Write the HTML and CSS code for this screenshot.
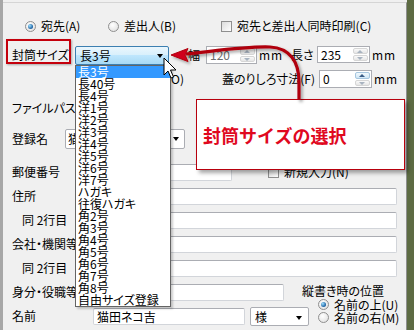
FILE: index.html
```html
<!DOCTYPE html>
<html lang="ja">
<head>
    <meta charset="UTF-8">
    <meta name="viewport" content="width=device-width, initial-scale=1.0">
    <title>封筒サイズの選択</title>
    <link rel="stylesheet" href="styles.css">
</head>
<body>
    <div class="screen">
        <div class="window">
            <div class="panel">
                <div class="row row-dest">
                    <label class="opt opt-a"><span class="radio on"></span>宛先(A)</label>
                    <label class="opt opt-b"><span class="radio"></span>差出人(B)</label>
                    <label class="opt"><span class="check"></span>宛先と差出人同時印刷(C)</label>
                </div>
                <div class="row row-size">
                    <span class="lbl lbl-size">封筒サイズ</span>
                    <div class="combo combo-hot">長3号<span class="arrow"></span></div>
                    <span class="lbl lbl-w">幅</span>
                    <div class="spin spin-w disabled"><span class="val">120</span><span class="btns"><i class="up"></i><i class="down"></i></span></div>
                    <span class="unit unit-w">mm</span>
                    <span class="lbl lbl-h">長さ</span>
                    <div class="spin"><span class="val">235</span><span class="btns"><i class="up"></i><i class="down"></i></span></div>
                    <span class="unit">mm</span>
                </div>
                <div class="row row-flap">
                    <span class="lbl lbl-o">(O)</span>
                    <span class="lbl lbl-f">蓋のりしろ寸法(F)</span>
                    <div class="spin spin-f"><span class="val">0</span><span class="btns"><i class="up hot"></i><i class="down"></i></span></div>
                    <span class="unit">mm</span>
                </div>
                <div class="row row-path">
                    <span class="lbl">ファイルパス</span>
                </div>
                <div class="row row-reg">
                    <span class="lbl lbl-reg">登録名</span>
                    <div class="combo combo-reg">猫田ネコ吉<span class="arrow"></span></div>
                </div>

                <div class="rows">
                    <div class="frow">
                        <span class="flbl">郵便番号</span>
                        <div class="field f-zip"></div>
                        <label class="opt opt-new"><span class="check"></span>新規入力(N)</label>
                    </div>
                    <div class="frow">
                        <span class="flbl">住所</span>
                        <div class="field f-wide"></div>
                    </div>
                    <div class="frow">
                        <span class="flbl sub">同 2行目</span>
                        <div class="field f-wide"></div>
                    </div>
                    <div class="frow">
                        <span class="flbl">会社・機関等</span>
                        <div class="field f-wide"></div>
                    </div>
                    <div class="frow">
                        <span class="flbl sub">同 2行目</span>
                        <div class="field f-wide"></div>
                    </div>
                    <div class="frow">
                        <span class="flbl">身分・役職等</span>
                        <div class="field f-title"></div>
                        <div class="vpos">
                            <div class="vpos-head">縦書き時の位置</div>
                            <label class="opt"><span class="radio on"></span>名前の上(U)</label>
                            <label class="opt"><span class="radio"></span>名前の右(M)</label>
                        </div>
                    </div>
                    <div class="frow">
                        <span class="flbl">名前</span>
                        <div class="field f-name">猫田ネコ吉</div>
                        <div class="combo combo-hon">様<span class="arrow"></span></div>
                    </div>
                </div>
            </div>
        </div>

        <!-- annotations over the dialog -->
        <div class="mark-box"></div>

        <ul class="droplist">
            <li class="sel">長3号</li>
            <li>長40号</li>
            <li>長4号</li>
            <li>洋1号</li>
            <li>洋2号</li>
            <li>洋3号</li>
            <li>洋4号</li>
            <li>洋5号</li>
            <li>洋6号</li>
            <li>洋7号</li>
            <li>ハガキ</li>
            <li>往復ハガキ</li>
            <li>角2号</li>
            <li>角3号</li>
            <li>角4号</li>
            <li>角5号</li>
            <li>角6号</li>
            <li>角7号</li>
            <li>角8号</li>
            <li>自由サイズ登録</li>
        </ul>

        <div class="callout">封筒サイズの選択</div>

        <svg class="pointer" width="414" height="330" viewBox="0 0 414 330">
            <defs>
                <filter id="sh" x="-20%" y="-20%" width="140%" height="140%">
                    <feDropShadow dx="2" dy="2" stdDeviation="1.5" flood-color="#000" flood-opacity="0.35"/>
                </filter>
            </defs>
            <g filter="url(#sh)">
                <path d="M186 54 C215 51 248 46 270 47 C290 48 299 62 299 82 L299 100" fill="none" stroke="#b0000f" stroke-width="3.2"/>
                <path d="M171 55 L188 48.5 L185 55 L188 61.5 Z" fill="#d0021b" stroke="#b0000f" stroke-width="1" stroke-linejoin="round"/>
            </g>
        </svg>

        <svg class="cursor" width="14" height="23" viewBox="0 0 14 23">
            <path d="M1 1 L1 18 L5 14 L8 21 L10.5 20 L7.5 13 L13 13 Z" fill="#fff" stroke="#000" stroke-width="1" stroke-linejoin="round"/>
        </svg>
    </div>
</body>
</html>
```

FILE: styles.css
```css
body {
    margin: 0;
    font-family: "Noto Sans CJK JP", sans-serif;
    font-size: 12px;
    font-feature-settings: "palt";
    color: #000;
}
.screen {
    position: relative;
    width: 414px;
    height: 330px;
    overflow: hidden;
    background-color: #5d6b43;
}
.window {
    width: 407px;
    height: 330px;
    background-color: #f0f0f0;
    border-left: 3px solid #a7a7a7;
    box-sizing: border-box;
    padding-top: 2px;
}
.panel {
    height: 328px;
    border-top: 1px solid #d5d5d5;
    border-right: 1px solid #8e8f8f;
    box-sizing: border-box;
    padding-top: 13px;
    padding-left: 1px;
}
.row {
    display: flex;
    align-items: center;
    height: 20px;
    line-height: 14px;
    white-space: nowrap;
}
.row-size {
    margin-top: 10px;
    align-items: flex-start;
}
.row-size .lbl {
    margin-top: 2px;
}
.row-flap {
    margin-top: 3px;
}
.row-path {
    margin-top: 9px;
}
.row-reg {
    margin-top: 11px;
}
.lbl {
    display: inline-block;
}
.row-path .lbl,
.lbl-size,
.lbl-reg {
    margin-left: 8px;
}
.lbl-size {
    width: 63px;
}
.lbl-reg {
    width: 53px;
}
.lbl-w {
    margin-left: 19px;
    width: 18px;
}
.lbl-h {
    width: 26px;
}
.lbl-o {
    margin-left: 163px;
    width: 55px;
}
.lbl-f {
    width: 97px;
}
.unit {
    margin-left: 2px;
    letter-spacing: 1px;
}
.unit-w {
    width: 32px;
}
.row-size .unit {
    margin-top: 2px;
}

/* radio buttons and check boxes */
.opt {
    display: inline-flex;
    align-items: center;
    gap: 5px;
}
.opt-a {
    margin-left: 21px;
    width: 83px;
}
.opt-b {
    width: 113px;
}
.radio {
    width: 11px;
    height: 11px;
    border: 1px solid #8f8f8f;
    border-radius: 50%;
    background: radial-gradient(circle at 40% 35%, #ffffff, #dcdcdc);
    box-sizing: border-box;
    position: relative;
}
.radio.on::after {
    content: "";
    position: absolute;
    left: 2px;
    top: 2px;
    width: 5px;
    height: 5px;
    border-radius: 50%;
    background: radial-gradient(circle at 35% 35%, #9fe0ff, #1a5fa0 70%);
}
.check {
    width: 11px;
    height: 11px;
    border: 1px solid #8f8f8f;
    background: linear-gradient(135deg, #dcdcdc, #ffffff);
    box-sizing: border-box;
}

/* combo boxes */
.combo {
    position: relative;
    height: 19px;
    line-height: 17px;
    padding-left: 4px;
    border: 1px solid #abadb3;
    border-radius: 2px;
    background-color: #fff;
    box-sizing: border-box;
    overflow: hidden;
}
.combo .arrow {
    position: absolute;
    right: 5px;
    top: 7px;
    border-left: 3.5px solid transparent;
    border-right: 3.5px solid transparent;
    border-top: 4px solid #000;
}
.combo-hot {
    width: 94px;
    border-color: #3c7fb1;
    background: linear-gradient(#eaf6fd, #d9f0fc 45%, #bee6fd 50%, #a7d9f5);
}
.combo-reg {
    width: 120px;
    height: 20px;
    line-height: 18px;
    padding-left: 2px;
}
.combo-hon {
    width: 59px;
    height: 19px;
    margin-left: 5px;
}
.combo-hon .arrow {
    right: 6px;
    top: 8px;
}

/* spin boxes */
.spin {
    display: flex;
    width: 53px;
    height: 17px;
    border: 1px solid #abadb3;
    background-color: #fff;
    box-sizing: border-box;
}
.spin-w {
    width: 51px;
    height: 18px;
}
.spin-f {
    height: 18px;
}
.spin .val {
    flex: 1;
    padding-left: 3px;
    line-height: 15px;
}
.spin.disabled .val {
    color: #6d6d6d;
}
.spin .btns {
    width: 15px;
    display: flex;
    flex-direction: column;
    gap: 1px;
    padding: 1px;
}
.spin .btns i {
    flex: 1;
    border: 1px solid #d6d6d6;
    border-radius: 2px;
    background: linear-gradient(#fafafa, #e6e6e6);
    position: relative;
}
.spin .btns i::after {
    content: "";
    position: absolute;
    left: 3px;
    top: 1px;
    border-left: 3px solid transparent;
    border-right: 3px solid transparent;
}
.spin .btns .up::after {
    border-bottom: 3px solid #a8b3c0;
}
.spin .btns .down::after {
    border-top: 3px solid #a8b3c0;
}
.spin .btns .up.hot::after {
    border-bottom-color: #3a5c86;
}
.spin .btns .hot {
    border-color: #a6c6df;
    background: linear-gradient(#f2f9fd, #cfe6f5);
}

/* address rows */
.rows {
    margin-top: 11px;
}
.frow {
    display: flex;
    align-items: center;
    height: 24px;
    white-space: nowrap;
    line-height: 14px;
}
.flbl {
    margin-left: 8px;
    width: 81px;
}
.flbl.sub {
    padding-left: 10px;
    width: 71px;
}
.field {
    height: 17px;
    line-height: 15px;
    padding-left: 3px;
    border: 1px solid #d2d5da;
    border-top-color: #abadb3;
    border-radius: 2px;
    background-color: #fff;
    box-sizing: border-box;
}
.f-zip {
    width: 139px;
}
.f-wide {
    width: 304px;
}
.f-title {
    width: 191px;
}
.f-name {
    width: 152px;
}
.opt-new {
    margin-left: 36px;
}
.vpos {
    align-self: flex-start;
    margin-top: 4px;
    margin-left: 18px;
    display: flex;
    flex-direction: column;
    line-height: 13px;
}
.vpos-head {
    height: 14px;
}
.vpos .opt {
    margin-left: 16px;
    height: 13px;
}

/* overlays */
.mark-box {
    position: absolute;
    left: 6px;
    top: 39px;
    width: 65px;
    height: 25px;
    border: 2px solid #c4000c;
    box-sizing: border-box;
    box-shadow: 1px 1px 2px rgba(0, 0, 0, 0.3);
}
.droplist {
    position: absolute;
    left: 75px;
    top: 65px;
    width: 96px;
    margin: 0;
    padding: 0;
    list-style: none;
    background-color: #fff;
    border: 1px solid #646464;
    box-sizing: border-box;
    box-shadow: 2px 2px 2px rgba(0, 0, 0, 0.2);
}
.droplist li {
    height: 12px;
    line-height: 12px;
    padding-left: 2px;
    white-space: nowrap;
}
.droplist li.sel {
    background-color: #3399ff;
    color: #fff;
}
.callout {
    position: absolute;
    left: 196px;
    top: 99px;
    width: 209px;
    height: 71px;
    padding-left: 6px;
    border: 1px solid #b8000d;
    box-sizing: border-box;
    background-color: #fff;
    box-shadow: 3px 3px 4px rgba(0, 0, 0, 0.35);
    display: flex;
    align-items: center;
    color: #e0081e;
    font-size: 18px;
    font-weight: bold;
    font-feature-settings: normal;
}
.pointer {
    position: absolute;
    left: 0;
    top: 0;
    pointer-events: none;
}
.cursor {
    position: absolute;
    left: 163px;
    top: 57px;
}
```
